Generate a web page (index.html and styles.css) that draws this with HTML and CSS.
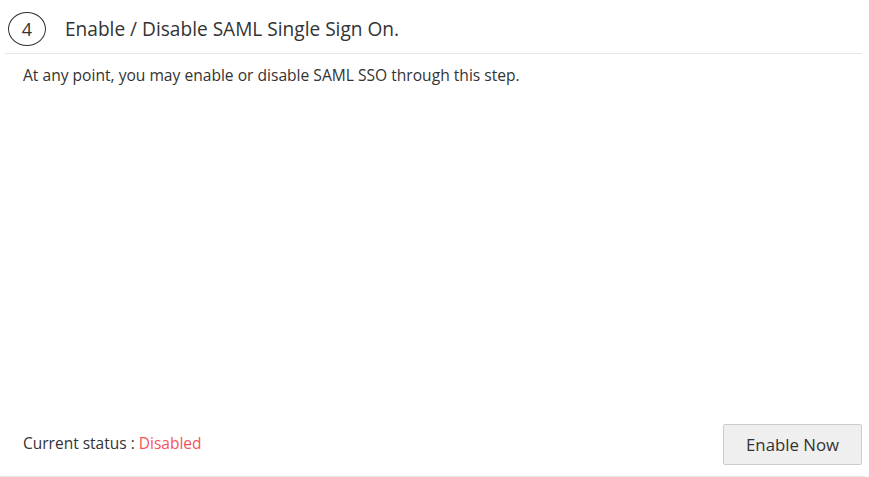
FILE: index.html
```html
<!DOCTYPE html>
<html>
<head>
<meta charset="utf-8">
<link rel="stylesheet" href="styles.css">
</head>
<body>
<div class="step">
  <div class="step-head">
    <span class="step-num">4</span>
    <span class="step-title">Enable / Disable SAML Single Sign On.</span>
  </div>
  <p class="step-desc">At any point, you may enable or disable SAML SSO through this step.</p>
  <div class="step-foot">
    <div class="status">Current status : <span class="status-off">Disabled</span></div>
    <button class="btn">Enable Now</button>
  </div>
</div>
</body>
</html>
```
FILE: styles.css
```css
html, body {
  margin: 0;
  padding: 0;
  background: #fff;
}
body {
  font-family: "Open Sans", sans-serif;
  color: #333;
  width: 869px;
  height: 477px;
  overflow: hidden;
}
.step {
  display: flex;
  flex-direction: column;
  height: 476px;
  border-bottom: 1px solid #e8e8e8;
  width: 865px;
}
.step-head {
  display: flex;
  align-items: center;
  margin-left: 5px;
  width: 857px;
  height: 53px;
  border-bottom: 1px solid #e6e6e6;
}
.step-num {
  display: flex;
  align-items: center;
  justify-content: center;
  width: 36px;
  height: 32px;
  border: 1px solid #333;
  border-radius: 50%;
  margin-left: 3px;
  margin-top: 5px;
  font-size: 18px;
  color: #333;
}
.step-title {
  margin-left: 19px;
  margin-top: 4px;
  font-size: 19.1px;
  color: #333;
}
.step-desc {
  margin: 9px 0 0 23px;
  font-size: 15.6px;
  line-height: 24px;
  color: #333;
}
.step-foot {
  margin-top: auto;
  display: flex;
  align-items: center;
  justify-content: space-between;
  padding: 0 0 11px 23px;
  width: 839px;
}
.status {
  font-size: 15.5px;
  color: #333;
  padding-bottom: 4px;
}
.status-off {
  color: #f3545c;
}
.btn {
  font-family: "Open Sans", sans-serif;
  font-size: 16.8px;
  color: #333;
  background: #efefef;
  border: 1px solid #cccccc;
  border-radius: 2px;
  width: 139px;
  height: 41px;
  padding: 0 0 1px;
  cursor: pointer;
}
```
